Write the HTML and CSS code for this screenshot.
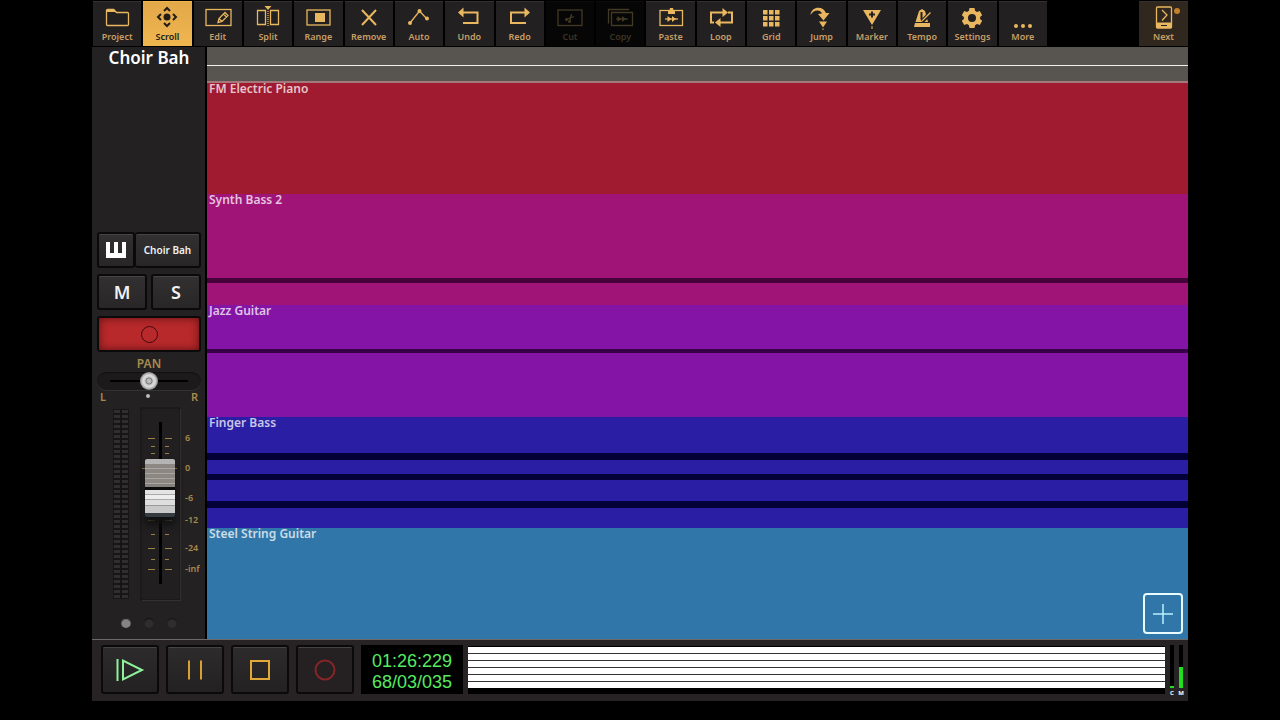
FILE: index.html
```html
<!DOCTYPE html>
<html lang="en">
<head>
  <meta charset="UTF-8" />
  <meta name="viewport" content="width=device-width, initial-scale=1" />
  <title>Choir Bah</title>
  <link rel="stylesheet" href="styles.css">
</head>
<body>
  <div class="app">
    <header class="toolbar">
      <nav class="tools">
        <button class="tool">
          <svg viewBox="0 0 30 24"><path d="M4.500 19.500V5.500q0-1 1-1h6l3 3h11q1 0 1 1v11q0 1-1 1h-20q-1 0-1-1z" class="line"/><path d="M5 4h7l2.500 3H5z" class="fill"/></svg>
          <span>Project</span>
        </button>
        <button class="tool active">
          <svg viewBox="0 0 30 24"><circle cx="15" cy="12" r="3.500" class="fill"/><path d="M12 6l3-3 3 3M12 18l3 3 3-3M9 9l-3 3 3 3M21 9l3 3-3 3" class="line thick"/></svg>
          <span>Scroll</span>
        </button>
        <button class="tool">
          <svg viewBox="0 0 30 24"><rect x="3" y="4.500" width="25" height="16" class="line"/><path d="M15 17.500l1-4 6-6 3 3-6 6zM16 13.500l3 3M20.500 9l3 3" class="line"/></svg>
          <span>Edit</span>
        </button>
        <button class="tool">
          <svg viewBox="0 0 30 24"><path d="M12.500 5.500H4.500v14h8zM17.500 5.500h8v14h-8z" class="line"/><path d="M15 6v15" class="line dash"/><path d="M11.500 1h7L15 5z" class="fill"/></svg>
          <span>Split</span>
        </button>
        <button class="tool">
          <svg viewBox="0 0 30 24"><rect x="4" y="5" width="23" height="15" class="line"/><rect x="12" y="8" width="10" height="9" class="fill"/></svg>
          <span>Range</span>
        </button>
        <button class="tool">
          <svg viewBox="0 0 30 24"><path d="M8 5l14 15M22 5L8 20" class="line thick"/></svg>
          <span>Remove</span>
        </button>
        <button class="tool">
          <svg viewBox="0 0 30 24"><path d="M6 18L15.500 6l7 7.500" class="line"/><circle cx="6" cy="18" r="2" class="fill"/><circle cx="15.500" cy="6" r="2" class="fill"/><circle cx="23" cy="13.500" r="2" class="fill"/></svg>
          <span>Auto</span>
        </button>
        <button class="tool">
          <svg viewBox="0 0 30 24"><path d="M9 7.500h14.500v10.500H9" class="line thick"/><path d="M4 7.500l5.500-5v10z" class="fill"/></svg>
          <span>Undo</span>
        </button>
        <button class="tool">
          <svg viewBox="0 0 30 24"><path d="M20 7.500H6v10.500h15" class="line thick"/><path d="M25 7.500l-5.500-5v10z" class="fill"/></svg>
          <span>Redo</span>
        </button>
        <button class="tool" disabled>
          <svg viewBox="0 0 30 24"><rect x="3" y="5" width="24" height="15.500" class="line"/><path d="M11 14.500l8-3M14.500 17l2-8" class="line"/><circle cx="11.500" cy="14.500" r="1.500" class="fill"/><circle cx="14.500" cy="16.500" r="1.500" class="fill"/></svg>
          <span>Cut</span>
        </button>
        <button class="tool" disabled>
          <svg viewBox="0 0 30 24"><path d="M3.500 18.500v-14H24M6.500 7.500h21v13h-21z" class="line"/><path d="M11 14h12" class="line"/><path d="M12.500 11l4 3-4 3zM17 11l4 3-4 3z" class="fill"/></svg>
          <span>Copy</span>
        </button>
        <button class="tool">
          <svg viewBox="0 0 30 24"><rect x="4" y="5.500" width="22.500" height="15" class="line"/><path d="M12 5.500h1.500l.5-2.500h3l.5 2.500H19V9h-7z" class="fill"/><path d="M9 14h13" class="line"/><path d="M11.500 11l4 3-4 3zM16 11l4 3-4 3z" class="fill"/></svg>
          <span>Paste</span>
        </button>
        <button class="tool">
          <svg viewBox="0 0 30 24"><path d="M8 17.500H5v-10h12M22 7.500h4v10H14" class="line thick"/><path d="M16.500 3l5.500 4.500-5.500 4.500zM14.500 13L9 17.500l5.500 4.500z" class="fill"/></svg>
          <span>Loop</span>
        </button>
        <button class="tool">
          <svg viewBox="0 0 30 24"><path d="M7 5h4.500v4.500H7zM13 5h4.500v4.500H13zM19 5h4.500v4.500H19zM7 11h4.500v4.500H7zM13 11h4.500v4.500H13zM19 11h4.500v4.500H19zM7 17h4.500v4.500H7zM13 17h4.500v4.500H13zM19 17h4.500v4.500H19z" class="fill"/></svg>
          <span>Grid</span>
        </button>
        <button class="tool">
          <svg viewBox="0 0 30 24"><path d="M3.500 10C4 1.500 16 0 19 8h3.500l-6 7.500L11 9l4-.500C13.500 4.500 7 4 3.500 10z" class="fill"/><path d="M12 16.500h8l-4 6zM15.500 25h1v-1.500h-1z" class="fill"/></svg>
          <span>Jump</span>
        </button>
        <button class="tool">
          <svg viewBox="0 0 30 24"><path d="M6 5h18l-9 15zM14.500 21h1v3h-1z" class="fill"/><path d="M15 6.500v6M12 9.500h6" class="cut"/></svg>
          <span>Marker</span>
        </button>
        <button class="tool">
          <svg viewBox="0 0 30 24"><path d="M7 22l1-4h15v4zM8.500 17L12 6l3-2 3 2 3 11z" class="fill"/><path d="M14.500 7v7.500" class="cut"/><path d="M15 16.500L24 7.500" class="cut wide"/><path d="M15 16L23.500 7.500" class="line"/></svg>
          <span>Tempo</span>
        </button>
        <button class="tool">
          <svg viewBox="0 0 30 24"><path fill-rule="evenodd" d="M12.500 3h5l.6 2.800 1.900 1.100 2.800-.9 2.400 4.200-2.100 1.900v1.800l2.100 1.900-2.400 4.200-2.800-.9-1.900 1.100-.6 2.800h-5l-.6-2.800-1.900-1.100-2.800.9-2.400-4.200 2.100-1.900v-1.800l-2.100-1.900L7.200 6l2.800.9 1.900-1.100zM15 9a4 4 0 1 0 0 8 4 4 0 0 0 0-8z" class="fill"/></svg>
          <span>Settings</span>
        </button>
        <button class="tool">
          <svg viewBox="0 0 30 24"><circle cx="8" cy="21" r="2" class="fill"/><circle cx="15" cy="21" r="2" class="fill"/><circle cx="22" cy="21" r="2" class="fill"/></svg>
          <span>More</span>
        </button>
      </nav>
      <button class="tool next">
        <svg viewBox="0 0 30 24"><rect x="7.500" y="2" width="15" height="21" rx="1" class="line"/><path d="M7.500 17.500h15V23h-15z" class="fill"/><path d="M12 20.500h6" class="cut thin"/><path d="M13 5l5 5-5 5.500" class="line"/></svg>
        <span>Next</span>
        <i class="badge"></i>
      </button>
    </header>

    <main class="workspace">
      <aside class="channel">
        <h1>Choir Bah</h1>

        <div class="strip">
          <div class="instrument">
            <button class="key" aria-label="Keyboard">
              <svg viewBox="0 0 22 18"><path d="M1 1h4v11h4V1h4v11h4V1h4v16H1z" fill="#fff"/></svg>
            </button>
            <button class="patch">Choir Bah</button>
          </div>
          <div class="row">
            <button class="big">M</button>
            <button class="big">S</button>
          </div>
          <button class="arm" aria-label="Record arm"><i></i></button>

          <label class="pan-label" for="pan">PAN</label>
          <input class="pan" id="pan" type="range" min="-50" max="50" value="0">
          <div class="pan-ends"><span>L</span><i></i><span>R</span></div>

          <div class="fader-box">
            <svg class="scale" viewBox="0 0 104 195">
              <defs>
                <pattern id="led" width="8" height="5" patternUnits="userSpaceOnUse" x="16" y="2">
                  <rect width="8" height="5" fill="#171516"/>
                  <rect x="1" y="1" width="6" height="3" fill="#302e2f"/>
                </pattern>
              </defs>
              <rect x="16" y="2" width="16" height="190" fill="url(#led)"/>
              <rect x="44" y="1" width="39" height="192" fill="#211f20" stroke="#171516"/>
              <path d="M45 193.500h39M83.500 2v191" stroke="#343132"/>
              <path d="M62 15h3v162h-3z" fill="#000"/>
              <path d="M51 31.500h7M68 31.500h7M54 39.500h4M68 39.500h4M54 46.500h4M68 46.500h4M45 61.500h35M51 113.500h7M68 113.500h7M54 127.500h4M68 127.500h4M51 141.500h7M68 141.500h7M54 152.500h4M68 152.500h4M51 162.500h7M68 162.500h7" stroke="#9a8146"/>
              <text x="88" y="34">6</text>
              <text x="88" y="64">0</text>
              <text x="88" y="94">-6</text>
              <text x="88" y="116">-12</text>
              <text x="88" y="144">-24</text>
              <text x="88" y="165">-inf</text>
            </svg>
            <input class="fader" type="range" min="0" max="100" value="64" aria-label="Volume">
          </div>

          <div class="pages"><i class="on"></i><i></i><i></i></div>
        </div>
      </aside>

      <section class="arrange">
        <div class="ruler"><div></div><div></div></div>
        <div class="track piano">FM Electric Piano</div>
        <div class="track synth">Synth Bass 2</div>
        <div class="track jazz">Jazz Guitar</div>
        <div class="track bass">Finger Bass</div>
        <div class="track steel">Steel String Guitar</div>
        <button class="add" aria-label="Add track">
          <svg viewBox="0 0 20 20"><path d="M10 0v20M0 10h20" stroke="#b9f0fa" stroke-width="1.500"/></svg>
        </button>
      </section>
    </main>

    <footer class="transport">
      <button aria-label="Play"><svg viewBox="0 0 30 24"><path d="M2.500 1v22" stroke="#8df29a" stroke-width="2"/><path d="M8 2.500v19L27 12z" stroke="#8df29a" stroke-width="2"/></svg></button>
      <button aria-label="Pause"><svg viewBox="0 0 30 24"><path d="M9 2.500v19M21 2.500v19" stroke="#d9a035" stroke-width="2"/></svg></button>
      <button aria-label="Stop"><svg viewBox="0 0 30 24"><path d="M6 3h18v18H6z" stroke="#e3a936" stroke-width="2"/></svg></button>
      <button aria-label="Record" class="dim"><svg viewBox="0 0 30 24"><circle cx="15" cy="12" r="9.500" stroke="#842528"/></svg></button>
      <div class="display">
        <span>01:26:229</span>
        <span>68/03/035</span>
      </div>
      <div class="overview"></div>
      <div class="meters">
        <div class="meter cpu"><div><i></i></div>C</div>
        <div class="meter mem"><div><i></i></div>M</div>
      </div>
    </footer>
  </div>
</body>
</html>
```

FILE: styles.css
```css
* {
  box-sizing: border-box;
}

body {
  background: #000;
  font-family: "Noto Sans", "Open Sans", sans-serif;
  margin: 0;
}

button {
  font-family: inherit;
  margin: 0;
  padding: 0;
  border: none;
  cursor: pointer;
}

svg {
  display: block;
  fill: none;
}

.app {
  display: flex;
  flex-direction: column;
  min-height: 100vh;
  padding: 0 92px 19px;
}

/* toolbar */
.toolbar {
  display: flex;
  justify-content: space-between;
  gap: 92px;
  height: 47px;
  padding: 1px 0 1px 1px;
}

.tools {
  display: flex;
  flex: 1;
  gap: 2px;
}

.tool {
  position: relative;
  flex: 1;
  display: flex;
  flex-direction: column;
  align-items: center;
  gap: 2px;
  padding-top: 3px;
  background: #222021;
  border-top: 1px solid #333031;
  color: #e9b75f;
}

.tool svg {
  width: 30px;
  height: 24px;
  overflow: visible;
}

.tool span {
  font-size: 9px;
  line-height: 12px;
  font-weight: 600;
  color: #c69f66;
}

.tool .fill {
  fill: currentColor;
}

.tool .line {
  stroke: currentColor;
  stroke-width: 1.3;
}

.tool .thick {
  stroke-width: 2;
}

.tool .dash {
  stroke-dasharray: 1 1;
}

.tool .cut {
  stroke: #222021;
  stroke-width: 2;
}

.tool .thin {
  stroke-width: 1;
}

.tool .wide {
  stroke-width: 4;
}

.tool.active {
  background: linear-gradient(#e3a849, #efb650);
  border-color: #efb650;
  color: #221d18;
}

.tool.active span {
  color: #221d18;
}

.tool:disabled {
  background: #070607;
  border-color: #0d0c0c;
  color: #423a24;
}

.tool:disabled span {
  color: #3a3423;
}

.tool.next {
  flex: 0 0 49px;
  background: #30281f;
}

.badge {
  position: absolute;
  top: 6px;
  right: 8px;
  width: 6px;
  height: 6px;
  border-radius: 50%;
  background: #c2802a;
}

.workspace {
  display: flex;
  flex: 1;
}

/* channel strip */
.channel {
  display: flex;
  flex-direction: column;
  justify-content: space-between;
  width: 115px;
  padding: 0 4px 0 5px;
  background: #232122;
  border-right: 2px solid #000;
}

.channel h1 {
  margin: 0;
  font-size: 17px;
  line-height: 22px;
  font-weight: 600;
  color: #fff;
  text-align: center;
  white-space: nowrap;
}

.strip {
  display: flex;
  flex-direction: column;
}

.instrument,
.row {
  display: flex;
  height: 36px;
  margin-bottom: 6px;
}

.row {
  gap: 4px;
}

.key,
.patch,
.big {
  background: linear-gradient(#323031, #282627);
  border: 2px solid #0b0a0a;
  border-radius: 3px;
  box-shadow: inset 0 1px #474445;
  color: #f2f2f2;
}

.key {
  width: 38px;
  padding: 0 6px;
}

.patch {
  flex: 1;
  border-left-width: 1px;
  font-size: 10px;
  font-weight: 600;
  white-space: nowrap;
}

.big {
  flex: 1;
  font-size: 18px;
  font-weight: 600;
}

.arm {
  display: flex;
  align-items: center;
  justify-content: center;
  height: 36px;
  background: #b8292b;
  border: 2px solid #0b0a0a;
  border-radius: 3px;
  box-shadow: inset 0 0 9px #5c1012;
}

.arm i {
  width: 17px;
  height: 17px;
  border: 1px solid #3e0a0c;
  border-radius: 50%;
}

.pan-label {
  margin-top: 4px;
  font-size: 12px;
  line-height: 16px;
  font-weight: 600;
  color: #a98a4c;
  text-align: center;
}

.pan,
.fader {
  appearance: none;
  margin: 0;
  background: transparent;
}

.pan {
  width: 100%;
  height: 18px;
  background: linear-gradient(#000, #000) center / 78px 2px no-repeat #1c1a1b;
  border-radius: 9px;
  box-shadow: inset 0 1px 1px #111, 0 1px #333;
}

.pan::-webkit-slider-thumb {
  appearance: none;
  width: 18px;
  height: 18px;
  border-radius: 50%;
  background: radial-gradient(circle, #bbb 2px, #777 3px, #ccc 4px, #ddd 6px, #888 9px);
}

.pan-ends {
  display: flex;
  justify-content: space-between;
  align-items: center;
  height: 12px;
  padding: 0 3px;
  font-size: 11px;
  font-weight: 600;
  color: #a98a4c;
}

.pan-ends i {
  width: 4px;
  height: 4px;
  border-radius: 50%;
  background: #bbb;
}

.fader-box {
  position: relative;
  margin-top: 5px;
}

.scale {
  width: 104px;
  height: 195px;
}

.scale text {
  font-size: 9px;
  font-weight: 600;
  fill: #a98a4c;
}

/* the fader cap slides over the scale */
.fader {
  position: absolute;
  top: 15px;
  left: 48px;
  width: 30px;
  height: 162px;
  writing-mode: vertical-lr;
  direction: rtl;
}

.fader::-webkit-slider-thumb {
  appearance: none;
  width: 30px;
  height: 58px;
  border-radius: 2px;
  background: linear-gradient(
    #b4b4b4 0 5px, #8c8783 5px 9px, #aaa6a2 9px 10px, #8c8783 10px 14px,
    #aaa6a2 14px 15px, #8c8783 15px 19px, #aaa6a2 19px 20px, #8c8783 20px 24px,
    #aaa6a2 24px 25px, #84807c 25px 28px, #0c0c0c 28px 31px, #e4e4e4 31px 35px,
    #aaa 35px 36px, #ededed 36px 40px, #aaa 40px 41px, #dedede 41px 46px,
    #999 46px 47px, #c8c8c8 47px 54px, #353b3e 54px);
  box-shadow: 0 8px 8px #111;
}

.pages {
  display: flex;
  justify-content: center;
  gap: 13px;
  height: 37px;
  padding-top: 16px;
}

.pages i {
  width: 10px;
  height: 10px;
  border-radius: 50%;
  background: #2f2d2e;
  box-shadow: inset 0 1px 1px #111;
}

.pages .on {
  background: #858384;
}

/* arrangement */
.arrange {
  position: relative;
  flex: 1;
  display: flex;
  flex-direction: column;
}

.ruler {
  background: #585450;
}

.ruler div {
  height: 19px;
  border-bottom: 1px solid #f2f0ee;
}

.ruler div + div {
  height: 17px;
  border-bottom: 2px solid #a5787c;
}

.track {
  flex: 1;
  padding-left: 2px;
  font-size: 12px;
  line-height: 12px;
  font-weight: 600;
  color: rgba(255, 255, 255, 0.75);
}

.piano {
  background: #a01a30;
}

.synth {
  background: linear-gradient(transparent 84px, #46033a 84px 89px, transparent 89px) #a01478;
}

.jazz {
  background: linear-gradient(transparent 44px, #370148 44px 48px, transparent 48px) #8314a5;
}

.bass {
  background: linear-gradient(transparent 36px, #040038 36px 43px, transparent 43px 57px,
    #040038 57px 63px, transparent 63px 84px, #040038 84px 91px, transparent 91px) #2a1ea5;
}

.steel {
  background: #3076a8;
}

.add {
  position: absolute;
  right: 5px;
  bottom: 5px;
  display: flex;
  align-items: center;
  justify-content: center;
  width: 40px;
  height: 41px;
  background: transparent;
  border: 2px solid #e8fbff;
  border-radius: 4px;
}

.add svg {
  width: 20px;
  height: 20px;
}

/* transport */
.transport {
  display: flex;
  align-items: flex-start;
  height: 62px;
  padding: 5px 4px 0 9px;
  background: #272324;
  border-top: 1px solid #6b696a;
}

.transport button {
  display: flex;
  align-items: center;
  justify-content: center;
  width: 58px;
  height: 49px;
  margin-right: 7px;
  background: linear-gradient(#2e2b2c, #232122);
  border: 2px solid #0b0a0a;
  border-radius: 3px;
  box-shadow: inset 0 1px #464344;
}

.transport button svg {
  width: 30px;
  height: 24px;
  stroke-width: 2;
}

.transport .dim {
  background: #252122;
}

.display {
  display: flex;
  flex-direction: column;
  justify-content: center;
  width: 102px;
  height: 49px;
  padding-top: 4px;
  background: #000;
  font-family: "Liberation Sans", Arial, sans-serif;
  font-size: 18px;
  line-height: 21px;
  color: #58ea60;
  text-align: center;
}

.overview {
  flex: 1;
  height: 48px;
  margin: 1px 4px 0 5px;
  border-top: 1px solid #000;
  border-bottom: 6px solid #000;
  background: repeating-linear-gradient(#fff 0 6px, #333 6px 7px);
}

.meters {
  display: flex;
  gap: 3px;
}

.meter {
  width: 6px;
  font-size: 6px;
  line-height: 11px;
  font-weight: 700;
  color: #fff;
  text-align: center;
}

.meter div {
  display: flex;
  align-items: flex-end;
  height: 43px;
  margin: 0 1px;
  background: #000;
}

.meter i {
  width: 100%;
  background: #22dd1e;
}

.cpu i {
  height: 2px;
}

.mem i {
  height: 21px;
}
```
